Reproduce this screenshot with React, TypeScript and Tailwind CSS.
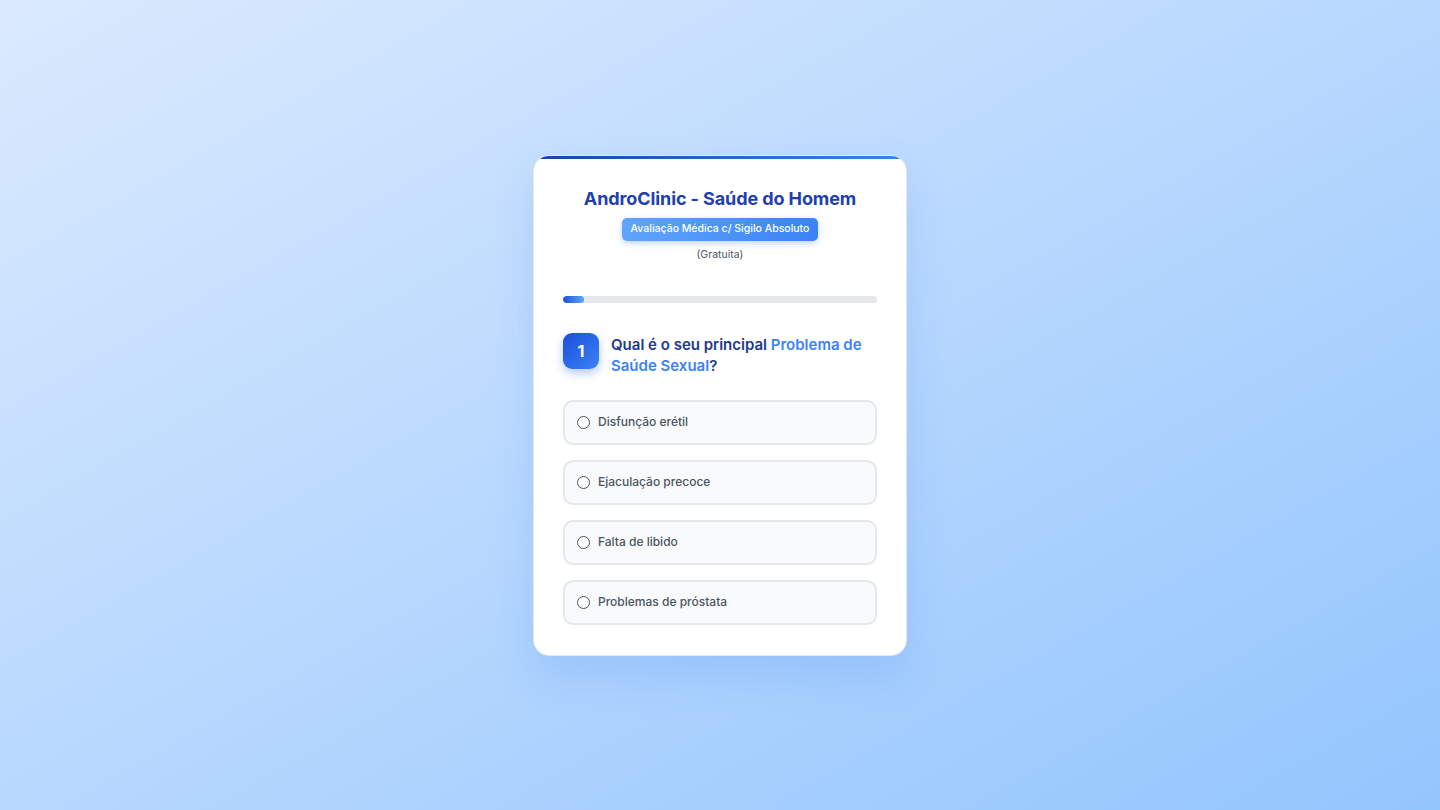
import React from "react";

const options = [
  "Disfunção erétil",
  "Ejaculação precoce",
  "Falta de libido",
  "Problemas de próstata",
];

export default function App() {
  return (
    <div
      className="min-h-screen w-full flex items-center justify-center bg-gradient-to-br from-[#dbeafe] to-[#93c5fd]"
      style={{ fontFamily: "Inter, 'Noto Sans', sans-serif" }}
    >
      <div className="relative w-[374px] bg-white rounded-[16px] border border-[#e5e7eb] overflow-hidden shadow-[0_20px_40px_rgba(59,130,246,0.18)] px-[29px] pt-[31px] pb-[30px]">
        <div className="absolute top-0 left-0 right-0 h-[3px] bg-gradient-to-r from-[#1e40af] to-[#3b82f6]" />
        <div className="flex flex-col items-center">
          <h1 className="text-[18px] leading-[24px] font-bold text-[#1e40af] tracking-[-0.1px]">
            AndroClinic - Saúde do Homem
          </h1>
          <div className="mt-[7px] h-[23px] px-[9px] flex items-center rounded-[5px] bg-gradient-to-r from-[#60a5fa] to-[#3b82f6] text-white text-[10.5px] font-medium shadow-[0_2px_6px_rgba(59,130,246,0.35)]">
            Avaliação Médica c/ Sigilo Absoluto
          </div>
          <div className="mt-[7px] text-[10.5px] leading-[14px] text-[#4b5563]">(Gratuita)</div>
        </div>

        <div className="mt-[34px] h-[7px] w-full rounded-full bg-[#e5e7eb] overflow-hidden">
          <div className="h-full w-[21px] rounded-full bg-gradient-to-r from-[#1d4ed8] to-[#60a5fa]" />
        </div>

        <div className="mt-[30px] flex items-start gap-[12px]">
          <div className="w-[36px] h-[36px] shrink-0 rounded-[9px] bg-gradient-to-br from-[#1d4ed8] to-[#3b82f6] flex items-center justify-center text-white font-bold text-[16px] shadow-[0_4px_10px_rgba(37,99,235,0.35)]">
            1
          </div>
          <p className="text-[15px] leading-[21px] font-semibold text-[#1e3a8a] pt-[1px]">
            Qual é o seu principal{" "}
            <span className="text-[#3b82f6]">Problema de Saúde Sexual</span>?
          </p>
        </div>

        <div className="mt-[24px] flex flex-col gap-[15px]">
          {options.map((o) => (
            <label
              key={o}
              className="h-[45px] flex items-center gap-[8px] px-[12px] rounded-[10px] border-2 border-[#e5e7eb] bg-[#f8fafc] cursor-pointer"
            >
              <span className="w-[13px] h-[13px] rounded-full border border-[#4b5563] bg-white shrink-0" />
              <span className="text-[12px] font-medium text-[#4b5563]">{o}</span>
            </label>
          ))}
        </div>
      </div>
    </div>
  );
}
